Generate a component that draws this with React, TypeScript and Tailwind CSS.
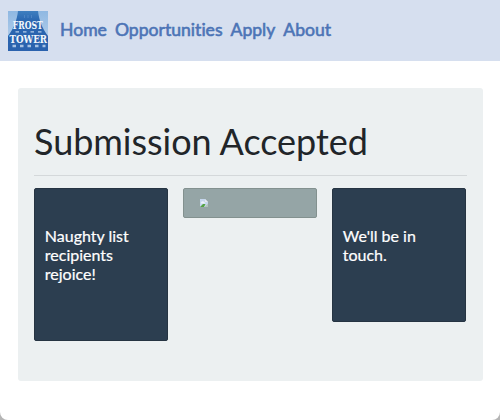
const links = ["Home", "Opportunities", "Apply", "About"];

function Logo() {
  return (
    <svg className="h-10 w-10 shrink-0 overflow-visible" viewBox="0 0 40 40" role="img">
      <defs>
        <linearGradient id="tower" x1="0" y1="0" x2="0" y2="1">
          <stop offset="0" stopColor="#3f7fc0" />
          <stop offset="0.25" stopColor="#2a66b0" />
          <stop offset="1" stopColor="#2a62ae" />
        </linearGradient>
        <linearGradient id="sky" x1="0" y1="0" x2="0" y2="1">
          <stop offset="0" stopColor="#8fb8e2" />
          <stop offset="1" stopColor="#c0d6ee" />
        </linearGradient>
      </defs>
      <rect width="40" height="40" fill="url(#sky)" />
      <path d="M10 0H30C31 9 34 17 40 25V40H0V25C6 17 9 9 10 0Z" fill="url(#tower)" />
      <path d="M16.5 4v3M20 4v3M23.5 4v3" stroke="#4c84c4" strokeWidth="1" />
      <path d="M7.5 20.8h27" stroke="#b5cdea" strokeWidth="1.3" strokeDasharray="3.5 4" />
      <path d="M4.5 35h33" stroke="#a5c1e4" strokeWidth="2.6" strokeDasharray="3.5 4" />
      <g fontFamily="Liberation Mono, monospace" fontWeight="bold" fill="#f2f7fc">
        <text x="4.8" y="17.8" textLength="30" fontSize="11.5" lengthAdjust="spacingAndGlyphs" fontFamily="DejaVu Serif, serif">FROST</text>
        <text x="1.5" y="32.3" textLength="37.5" fontSize="11.5" lengthAdjust="spacingAndGlyphs" fontFamily="DejaVu Serif, serif">TOWER</text>
      </g>
    </svg>
  );
}

function BrokenImage() {
  return (
    <svg className="h-2 w-2" viewBox="0 0 8 8" role="img">
      <path d="M0 0h5l3 3v5H0Z" fill="#c5d6ee" />
      <path d="M1 3.5q1-2 2.5-1t2 2H1Z" fill="#edf2fa" />
      <path d="M0 8l3-3h2.5L4 8Z" fill="#55a245" />
      <path d="M5 0v3h3Z" fill="#e6e9ed" />
      <path d="M8 4.5L4.5 8H8Z" fill="#b4c4bd" />
    </svg>
  );
}

function Card({ text, height }: { text: string; height: string }) {
  return (
    <div className={`${height} w-[134px] rounded-[2px] border border-[#263442] bg-[#2c3e50] px-[9.8px] pt-[37px] text-base leading-[19.2px] text-white [-webkit-text-stroke:0.2px_white]`}>
      {text}
    </div>
  );
}

export default function App() {
  return (
    <div className="h-[420px] bg-[#b5b5b5] font-['Lato','Liberation_Sans',sans-serif]">
      <div className="h-full rounded-b-[8px] bg-white">
        <header className="flex h-[61px] items-center bg-[#d6dfef] pl-2">
          <Logo />
          <nav className="ml-3 flex gap-2 pb-[2px] text-[17.6px] leading-7 text-[#4c74b6] [-webkit-text-stroke:0.6px_#4c74b6] [font-variant-ligatures:none]">
            {links.map((l) => (
              <a key={l}>{l}</a>
            ))}
          </nav>
        </header>
        <main className="mt-[27px] ml-[18px] h-[293px] w-[465px] rounded-[3px] bg-[#ecf0f1] px-4 pt-8">
          <h1 className="h-[55px] text-[36px] leading-[43px] tracking-[-0.04px] whitespace-nowrap text-[#212529]">Submission Accepted</h1>
          <hr className="mb-3 border-[#d4d8da]" />
          <div className="flex items-start gap-[15px]">
            <Card text="Naughty list recipients rejoice!" height="h-[153px]" />
            <div className="h-[30px] w-[134px] rounded-[2px] border border-[#83918f] bg-[#95a5a6] pt-[10px] pl-4">
              <BrokenImage />
            </div>
            <Card text="We'll be in touch." height="h-[134px]" />
          </div>
        </main>
      </div>
    </div>
  );
}
